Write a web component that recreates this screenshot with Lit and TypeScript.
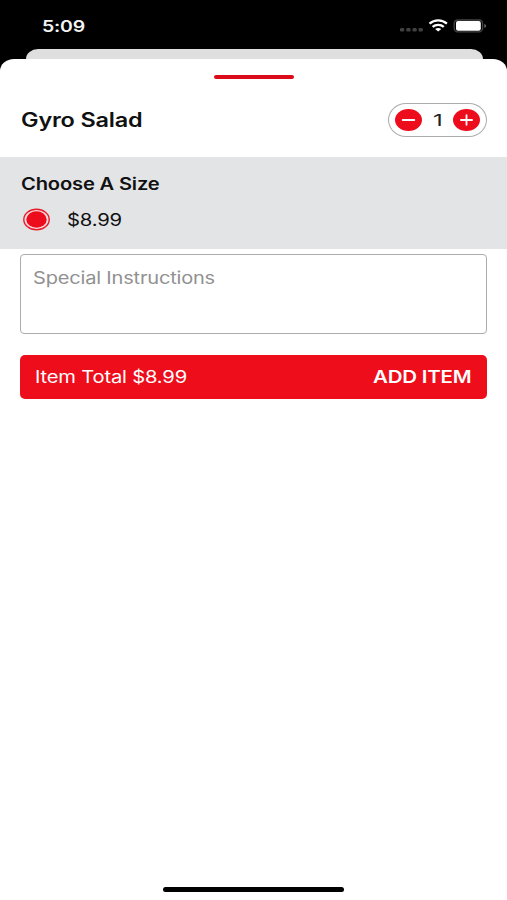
import { LitElement, html, css, svg } from "lit";
import { customElement, property, state } from "lit/decorators.js";

@customElement("wide-label")
class WideLabel extends LitElement {
  @property() text = "";
  @property({ type: Number }) width = 100;
  @property({ type: Number }) size = 16;
  @property({ type: Number }) weight = 400;

  static styles = css`
    :host { display: block; flex: none; height: 24px; }
    svg { display: block; overflow: visible; }
    text { font-family: Inter, "Liberation Sans", sans-serif; fill: currentColor; letter-spacing: -.15px; }
  `;

  render() {
    return html`<svg width=${this.width} height="24">
      ${svg`<text x="0" y="18" font-size=${this.size} font-weight=${this.weight}
        textLength=${this.width} lengthAdjust="spacingAndGlyphs">${this.text}</text>`}
    </svg>`;
  }
}

@customElement("status-bar")
class StatusBar extends LitElement {
  static styles = css`
    :host {
      display: flex; justify-content: space-between; box-sizing: border-box;
      height: 49px; padding: 13.5px 20px 0 42px; color: #f4f4f4;
    }
    svg { display: block; }
  `;
  render() {
    return html`
      <wide-label text="5:09" width="43" size="15.8" weight="600"></wide-label>
      <svg width="88" height="24" viewBox="399 14 88 24">
        <g fill="#414141">
          <rect x="400" y="28" width="4.2" height="3.4" rx="1.2" />
          <rect x="406.3" y="28" width="4.2" height="3.4" rx="1.2" />
          <rect x="412.5" y="28" width="4.2" height="3.4" rx="1.2" />
          <rect x="418.6" y="28" width="4.2" height="3.4" rx="1.2" />
        </g>
        <g fill="none" stroke="#fff" stroke-width="2.3">
          <path d="M429.5 23.6C434.4 19.2 442 19.2 446.9 23.6" />
          <path d="M432.6 26.9C435.7 24.1 440.7 24.1 443.8 26.9" />
        </g>
        <path d="M435.1 29.1Q438.2 27 441.3 29.1L438.2 31.6Z" fill="#fff" />
        <rect x="454.2" y="20" width="28.4" height="11.8" rx="3.5" fill="none" stroke="#444" stroke-width="1.3" />
        <rect x="456" y="21.1" width="24.8" height="9.6" rx="2" fill="#fff" />
        <path d="M484.3 24Q486.2 24.5 486.2 25.9Q486.2 27.3 484.3 27.8Z" fill="#666" />
      </svg>
    `;
  }
}

@customElement("quantity-stepper")
class QuantityStepper extends LitElement {
  @property({ type: Number }) value = 1;

  static styles = css`
    :host {
      display: flex; align-items: center; justify-content: space-between;
      box-sizing: border-box; width: 99.5px; height: 34px; padding: 0 6px;
      border: 1.5px solid #acacac; border-radius: 18px / 17px; background: #fff; color: #222;
    }
    button { all: unset; display: block; width: 27px; height: 22px; cursor: pointer; }
    svg { display: block; }
  `;

  private change(step: number) {
    this.dispatchEvent(new CustomEvent("change-quantity", { detail: Math.max(1, this.value + step) }));
  }

  private button(path: string, name: string, step: number) {
    return html`<button aria-label=${name} @click=${() => this.change(step)}>
      <svg width="27" height="22" viewBox="0 0 27 22">
        <ellipse cx="13.5" cy="11" rx="13.5" ry="11" fill="#ed0c1b" />
        <path d=${path} stroke="#fff" stroke-width="1.8" stroke-linecap="round" />
      </svg>
    </button>`;
  }

  render() {
    return html`
      ${this.button("M7.7 11H19.3", "Remove one", -1)}
      <wide-label text=${this.value} width="9.5" size="16" weight="400"></wide-label>
      ${this.button("M7.9 11H19.1M13.5 6.2V15.8", "Add one", 1)}
    `;
  }
}

@customElement("app-root")
class AppRoot extends LitElement {
  @state() private quantity = 1;

  static styles = css`
    :host { display: flex; flex-direction: column; height: 900px; background: #000; color: #111; overflow: hidden; }
    .behind { flex: none; height: 26px; margin: 0 24.5px 0 25.5px; border-radius: 12px 12px 0 0 / 10px 10px 0 0; background: #dfdfdf; }
    .sheet {
      flex: 1; display: flex; flex-direction: column; align-items: stretch; z-index: 1;
      margin-top: -16px; background: #fff; border-radius: 14px 14px 0 0 / 12px 12px 0 0;
    }
    .grabber { align-self: center; width: 80px; height: 4px; margin: 16px 0 0; border-radius: 2px; background: #dc0b19; }
    .title { display: flex; justify-content: space-between; align-items: center; height: 34px; margin: 24px 19.6px 20px 20.5px; }
    .title > wide-label { padding-top: 1px; }
    .sizes { box-sizing: border-box; height: 92px; padding: 14.5px 20.5px 0; background: #e3e4e6; }
    .option { display: flex; align-items: center; gap: 16.5px; margin-top: 11px; padding-left: 2px; }
    .option svg { display: block; margin-top: 1px; }
    .option wide-label { padding-top: 1.2px; }
    .notes {
      box-sizing: border-box; height: 80px; margin: 4.6px 19.6px 0 20.4px; padding: 11.6px 12px;
      border: 1.5px solid #acacac; border-radius: 4px; color: #919191;
    }
    .add {
      all: unset; display: flex; align-items: center; justify-content: space-between; box-sizing: border-box;
      height: 44px; margin: 21.4px 19.6px 0 20.4px; padding: 0 15.5px 0 14.5px; border-radius: 5px;
      background: #ee0d1a; color: #fff; cursor: pointer;
    }
    .home { align-self: center; width: 181px; height: 5px; margin: auto 0 8px; border-radius: 3px; background: #000; }
  `;

  render() {
    const total = (8.99 * this.quantity).toFixed(2);
    return html`
      <status-bar></status-bar>
      <div class="behind"></div>
      <main class="sheet">
        <div class="grabber"></div>
        <header class="title">
          <wide-label text="Gyro Salad" width="121.5" size="19.5" weight="600"></wide-label>
          <quantity-stepper
            .value=${this.quantity}
            @change-quantity=${(e: CustomEvent) => (this.quantity = e.detail)}
          ></quantity-stepper>
        </header>
        <section class="sizes">
          <wide-label text="Choose A Size" width="138.5" size="16.8" weight="600"></wide-label>
          <div class="option">
            <svg width="28" height="23" viewBox="0 0 28 23">
              <ellipse cx="13.5" cy="11.5" rx="12.7" ry="10.3" fill="#f4dcde" stroke="#e81b29" stroke-width="1.4" />
              <ellipse cx="13.5" cy="11.5" rx="10.2" ry="8.3" fill="#ed0c1b" />
            </svg>
            <wide-label text="$8.99" width="55" size="16.8"></wide-label>
          </div>
        </section>
        <div class="notes">
          <wide-label text="Special Instructions" width="182" size="16.8"></wide-label>
        </div>
        <button class="add">
          <wide-label text=${`Item Total $${total}`} width="152" size="16.8"></wide-label>
          <wide-label text="ADD ITEM" width="98.5" size="16.8" weight="600"></wide-label>
        </button>
        <div class="home"></div>
      </main>
    `;
  }
}
